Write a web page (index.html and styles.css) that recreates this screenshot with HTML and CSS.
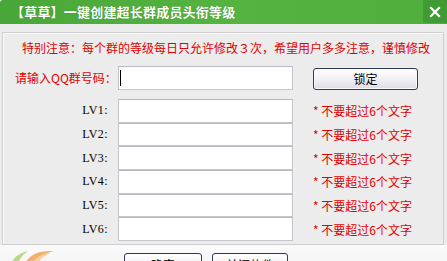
FILE: index.html
```html
<!DOCTYPE html>
<html lang="zh-CN">
<head>
<meta charset="utf-8">
<title>【草草】一键创建超长群成员头衔等级</title>
<link rel="stylesheet" href="styles.css">
</head>
<body>
<div class="window">
  <div class="titlebar">
    <span class="title">【草草】一键创建超长群成员头衔等级</span>
    <span class="close">
      <svg width="12" height="12" viewBox="0 0 12 12"><path d="M2 2 L10 10 M10 2 L2 10" stroke="#fff" stroke-width="2.2" stroke-linecap="square"/></svg>
    </span>
  </div>
  <div class="client">
    <div class="group">
      <p class="notice">特别注意：每个群的等级每日只允许修改３次，希望用户多多注意，谨慎修改</p>
      <div class="qq-row">
        <span class="qq-label">请输入QQ群号码：</span>
        <div class="input qq"><span class="caret"></span></div>
        <button class="btn lock">锁定</button>
      </div>
      <div class="levels">
        <span class="lv">LV1:</span><div class="input"></div><span class="hint">* 不要超过6个文字</span>
        <span class="lv">LV2:</span><div class="input"></div><span class="hint">* 不要超过6个文字</span>
        <span class="lv">LV3:</span><div class="input"></div><span class="hint">* 不要超过6个文字</span>
        <span class="lv">LV4:</span><div class="input"></div><span class="hint">* 不要超过6个文字</span>
        <span class="lv">LV5:</span><div class="input"></div><span class="hint">* 不要超过6个文字</span>
        <span class="lv">LV6:</span><div class="input"></div><span class="hint">* 不要超过6个文字</span>
      </div>
    </div>
    <div class="footer">
      <svg class="logo" width="56" height="20" viewBox="0 0 56 20">
        <path d="M10 20 C12 12 18 6 28 4 C22 8 18 14 17 20 Z" fill="#b9d98a"/>
        <path d="M24 20 C26 10 36 3 54 4 C44 6 36 12 33 20 Z" fill="#f0b070"/>
        <path d="M30 20 C33 12 40 7 50 6 C42 10 38 14 37 20 Z" fill="#f6cfa0"/>
      </svg>
      <button class="btn foot ok">确定</button>
      <button class="btn foot quit">关闭软件</button>
    </div>
  </div>
</div>
</body>
</html>
```

FILE: styles.css
```css
* { box-sizing: border-box; }
html, body {
  margin: 0;
  padding: 0;
  width: 447px;
  height: 261px;
  overflow: hidden;
  background: #ececec;
  font-family: "Noto Sans CJK SC", "Noto Sans", sans-serif;
}
.window {
  width: 447px;
  height: 261px;
  display: flex;
  flex-direction: column;
}
.titlebar {
  height: 24px;
  flex: none;
  display: flex;
  align-items: center;
  justify-content: space-between;
  background: linear-gradient(to right, #48a738 0%, #55b341 50%, #4fae3c 100%);
  border-radius: 3px 3px 0 0;
}
.title {
  color: #fff;
  font-weight: bold;
  font-size: 13px;
  line-height: 24px;
  padding-left: 11px;
  letter-spacing: 0.2px;
  text-shadow: 0 0 1px rgba(0, 60, 0, 0.4);
}
.close {
  width: 24px;
  height: 23px;
  align-self: flex-start;
  background: #419b35;
  display: flex;
  align-items: center;
  justify-content: center;
}
.client {
  flex: 1;
  min-height: 0;
  display: flex;
  flex-direction: column;
  padding-top: 8px;
}
.group {
  flex: none;
  margin: 0 3px 0 2px;
  border: 1px solid #cfcfcf;
  box-shadow: inset 1px 1px 0 #fbfbfb;
  padding: 7px 0 3px 0;
}
.notice {
  margin: 0 0 0 19px;
  font-size: 12px;
  line-height: 16px;
  color: #e00000;
  white-space: nowrap;
}
.qq-row {
  margin-top: 9px;
  height: 24px;
  display: grid;
  grid-template-columns: 115px 175px 20px 105px;
  align-items: center;
}
.qq-label {
  font-size: 12px;
  color: #e00000;
  padding-left: 12px;
  white-space: nowrap;
}
.levels {
  margin-top: 10px;
  display: grid;
  grid-template-columns: 115px 175px 20px auto;
  grid-auto-rows: 23.67px;
  align-items: center;
}
.levels > .hint { grid-column: 4; }
.levels > .input { grid-column: 2; }
.levels > .lv { grid-column: 1; }
.input {
  height: 100%;
  background: #fff;
  border: 1px solid #c4c4cc;
  border-top-color: #b8b8c6;
  position: relative;
}
.qq-row > .input { grid-column: 2; height: 24px; }
.qq-row > .lock { grid-column: 4; }
.caret {
  position: absolute;
  left: 1px;
  top: 3px;
  width: 1px;
  height: 16px;
  background: #000;
}
.lock {
  width: 105px;
  height: 22px;
  margin-top: 3px;
}
.btn {
  font-family: "Noto Sans CJK SC", sans-serif;
  font-size: 12px;
  color: #000;
  border: 1px solid #2f3b5c;
  border-radius: 3px;
  background: linear-gradient(to bottom, #ffffff 0%, #f2f2f6 45%, #dcdce6 100%);
  box-shadow: inset 0 0 0 1px #fafafa;
  padding: 0;
  line-height: 18px;
}
.lv {
  font-family: "Liberation Serif", serif;
  font-size: 12px;
  color: #000;
  text-align: right;
  padding-right: 10px;
  letter-spacing: 0.4px;
}
.hint {
  font-size: 12px;
  color: #e00000;
  white-space: nowrap;
}
.footer {
  flex: 1;
  display: flex;
  align-items: flex-start;
  background: linear-gradient(to bottom, #fafafa, #f2f2f2);
}
.logo {
  margin-top: 2px;
  flex: none;
}
.foot {
  margin-top: 8px;
  height: 24px;
  line-height: 20px;
  width: 78px;
  flex: none;
}
.ok { margin-left: 68px; }
.quit { margin-left: 10px; width: 76px; }
```
